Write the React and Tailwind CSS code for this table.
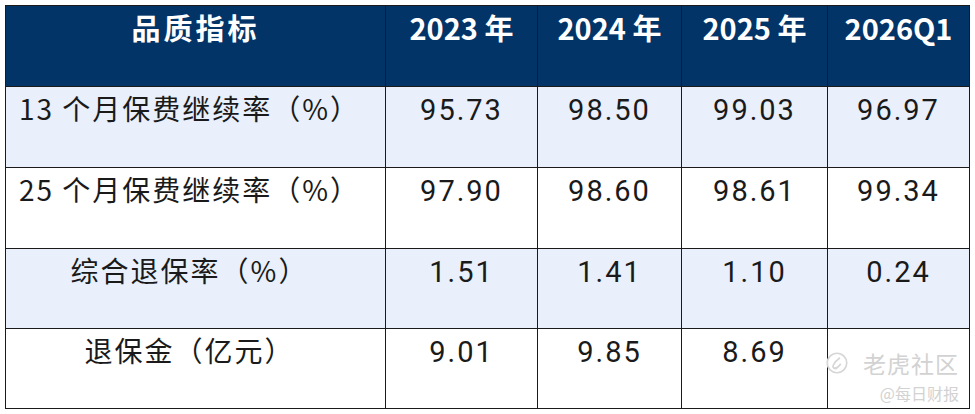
import React from "react";

const cols = ["w-[380px]", "w-[152px]", "w-[144px]", "w-[146px]", "w-[142px]"];

const rows = [
  { label: "13 个月保费继续率（%）", values: ["95.73", "98.50", "99.03", "96.97"], bg: "bg-[#e9f0fb]", h: "h-[81px]" },
  { label: "25 个月保费继续率（%）", values: ["97.90", "98.60", "98.61", "99.34"], bg: "bg-white", h: "h-[81px]" },
  { label: "综合退保率（%）", values: ["1.51", "1.41", "1.10", "0.24"], bg: "bg-[#e9f0fb]", h: "h-[80px]" },
  { label: "退保金（亿元）", values: ["9.01", "9.85", "8.69", ""], bg: "bg-white", h: "h-[80px]" },
];

const headers = ["品质指标", "2023 年", "2024 年", "2025 年", "2026Q1"];

function Watermark() {
  return (
    <div className="absolute right-[10px] bottom-[8px] flex flex-col items-end pointer-events-none text-[#d2d2d2]">
      <div className="flex items-center gap-[14px]">
        <svg width="24" height="24" viewBox="0 0 32 32" fill="none" stroke="#d6d6d6" strokeWidth="2.2">
          <circle cx="16" cy="16" r="13" />
          <path d="M20 9c-3 2-7 6-9 10-1 2 0 4 2 4 3 0 6-3 8-6" />
          <path d="M12 24c1-1 3-1 4 0" />
        </svg>
        <span className="text-[23px] leading-none tracking-[1px]">老虎社区</span>
      </div>
      <span className="mt-[10px] text-[16px] leading-none">@每日财报</span>
    </div>
  );
}

export default function App() {
  return (
    <div
      className="w-[975px] h-[414px] bg-white pt-[5px] pl-[5px]"
      style={{ fontFamily: '"Noto Sans CJK SC", "Noto Sans", sans-serif' }}
    >
      <div className="relative w-[964px]">
        <table className="border-collapse table-fixed w-[964px]">
          <thead>
            <tr className="h-[81px] bg-[#033467]">
              {headers.map((h, i) => (
                <th
                  key={h}
                  className={`${cols[i]} border-[1.5px] border-[#1a1a1a] align-top pt-[4px] text-white font-bold text-[29px] leading-[1.2] ${i === 0 ? "tracking-[3px]" : "tracking-[0px]"}`}
                >
                  {h}
                </th>
              ))}
            </tr>
          </thead>
          <tbody>
            {rows.map((r) => (
              <tr key={r.label} className={`${r.h} ${r.bg}`}>
                <td className="border-[1.5px] border-[#1a1a1a] align-top pt-[5px] pr-[12px] text-center text-[28px] font-normal leading-[1.2] tracking-[2px] text-[#1a1a1a]">
                  {r.label}
                </td>
                {r.values.map((v, i) => (
                  <td
                    key={i}
                    className="border-[1.5px] border-[#1a1a1a] align-top pt-[6px] text-center text-[29px] font-normal leading-[1.2] tracking-[2px] text-[#1a1a1a]"
                    style={{ fontFamily: 'Roboto, "Noto Sans", sans-serif' }}
                  >
                    {v}
                  </td>
                ))}
              </tr>
            ))}
          </tbody>
        </table>
        <Watermark />
      </div>
    </div>
  );
}
